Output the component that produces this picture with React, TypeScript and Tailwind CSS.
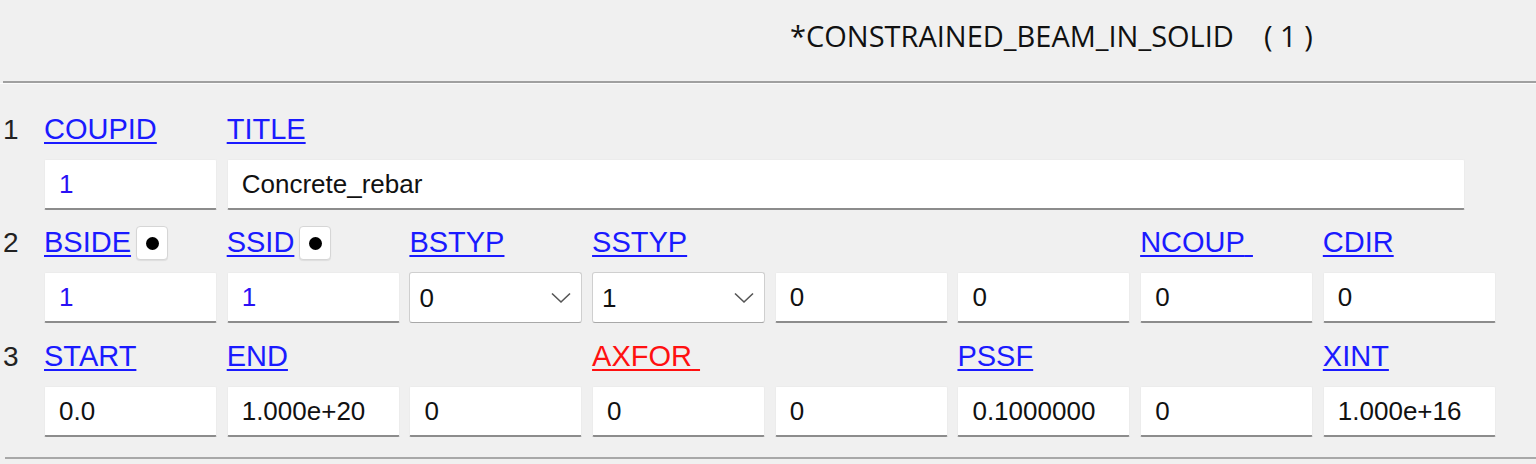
import React from "react"

type Cell =
  | { kind: "input"; value: string; blue?: boolean; wide?: boolean }
  | { kind: "select"; value: string }

type Label = { text: string; red?: boolean; dot?: boolean; trail?: boolean } | null

const rows: { num: string; labels: Label[]; cells: Cell[] }[] = [
  {
    num: "1",
    labels: [{ text: "COUPID" }, { text: "TITLE" }, null, null, null, null, null, null],
    cells: [
      { kind: "input", value: "1", blue: true },
      { kind: "input", value: "Concrete_rebar", wide: true },
    ],
  },
  {
    num: "2",
    labels: [
      { text: "BSIDE", dot: true },
      { text: "SSID", dot: true },
      { text: "BSTYP" },
      { text: "SSTYP" },
      null,
      null,
      { text: "NCOUP", trail: true },
      { text: "CDIR" },
    ],
    cells: [
      { kind: "input", value: "1", blue: true },
      { kind: "input", value: "1", blue: true },
      { kind: "select", value: "0" },
      { kind: "select", value: "1" },
      { kind: "input", value: "0" },
      { kind: "input", value: "0" },
      { kind: "input", value: "0" },
      { kind: "input", value: "0" },
    ],
  },
  {
    num: "3",
    labels: [
      { text: "START" },
      { text: "END" },
      null,
      { text: "AXFOR", red: true, trail: true },
      null,
      { text: "PSSF" },
      null,
      { text: "XINT" },
    ],
    cells: [
      { kind: "input", value: "0.0" },
      { kind: "input", value: "1.000e+20" },
      { kind: "input", value: "0" },
      { kind: "input", value: "0" },
      { kind: "input", value: "0" },
      { kind: "input", value: "0.1000000" },
      { kind: "input", value: "0" },
      { kind: "input", value: "1.000e+16" },
    ],
  },
]

function Chevron() {
  return (
    <svg width="20" height="12" viewBox="0 0 20 12" className="shrink-0">
      <path d="M1 1.5 L10 10 L19 1.5" fill="none" stroke="#555" strokeWidth="1.6" />
    </svg>
  )
}

function FieldLabel({ label }: { label: Label }) {
  if (!label) return <div />
  return (
    <div className="flex items-center h-[36px] text-[29px]">
      <span
        className={`underline underline-offset-[3px] decoration-[2px] ${
          label.red ? "text-[#ff1010]" : "text-[#1a1aff]"
        }`}
      >
        {label.text}
        {label.trail ? "\u00a0" : ""}
      </span>
      {label.dot && (
        <div className="ml-[5px] w-[32px] h-[34px] bg-white border border-[#d6d6d6] rounded-[4px] flex items-center justify-center shadow-[0_1px_1px_rgba(0,0,0,0.08)]">
          <div className="w-[13px] h-[13px] rounded-full bg-black" />
        </div>
      )}
    </div>
  )
}

function FieldCell({ cell }: { cell: Cell }) {
  if (cell.kind === "select") {
    return (
      <div className="h-[51px] bg-white border border-[#cfcfcf] border-b-[#a8a8a8] rounded-[3px] flex items-center pl-[9px] pr-[10px] justify-between text-[#111]">
        <span className="pt-[2px]">{cell.value}</span>
        <Chevron />
      </div>
    )
  }
  return (
    <div
      className={`h-[51px] bg-white rounded-[2px] border border-[#ececec] border-b-[2px] border-b-[#8c8c8c] flex items-center pl-[14px] ${
        cell.blue ? "text-[#2a10f5]" : "text-[#111]"
      } ${cell.wide ? "col-span-7 w-[1238px]" : ""}`}
    >
      {cell.value}
    </div>
  )
}

export default function App() {
  return (
    <div className="w-[1536px] h-[464px] bg-[#f0f0f0] overflow-hidden font-['Liberation_Sans',Arial,sans-serif] text-[26px]">
      <div className="h-[81px] pl-[790px] pt-[14px] text-[29px] text-[#111] font-['Open_Sans','Noto_Sans',sans-serif] whitespace-pre">
        {"*CONSTRAINED_BEAM_IN_SOLID    ( 1 )"}
      </div>
      <div className="ml-[3px] h-[2px] bg-[#a0a0a0]" />
      <div className="h-[1px] bg-white/70" />

      <div className="pt-[28px]">
        {rows.map((row, i) => (
          <div key={row.num} className={`flex ${i === 1 ? "mt-[15px]" : i === 2 ? "mt-[16px]" : ""}`}>
            <div className="w-[44px] pl-[3px] h-[36px] flex items-center text-[28px] text-[#222]">{row.num}</div>
            <div className="grid grid-cols-[repeat(8,173px)] gap-x-[9.7px] gap-y-[11px]">
              {row.labels.map((l, j) => (
                <FieldLabel key={j} label={l} />
              ))}
              {row.cells.map((c, j) => (
                <FieldCell key={j} cell={c} />
              ))}
            </div>
          </div>
        ))}
      </div>

      <div className="mt-[20px] ml-[5px] h-[2px] bg-[#a8a8a8]" />
    </div>
  )
}
